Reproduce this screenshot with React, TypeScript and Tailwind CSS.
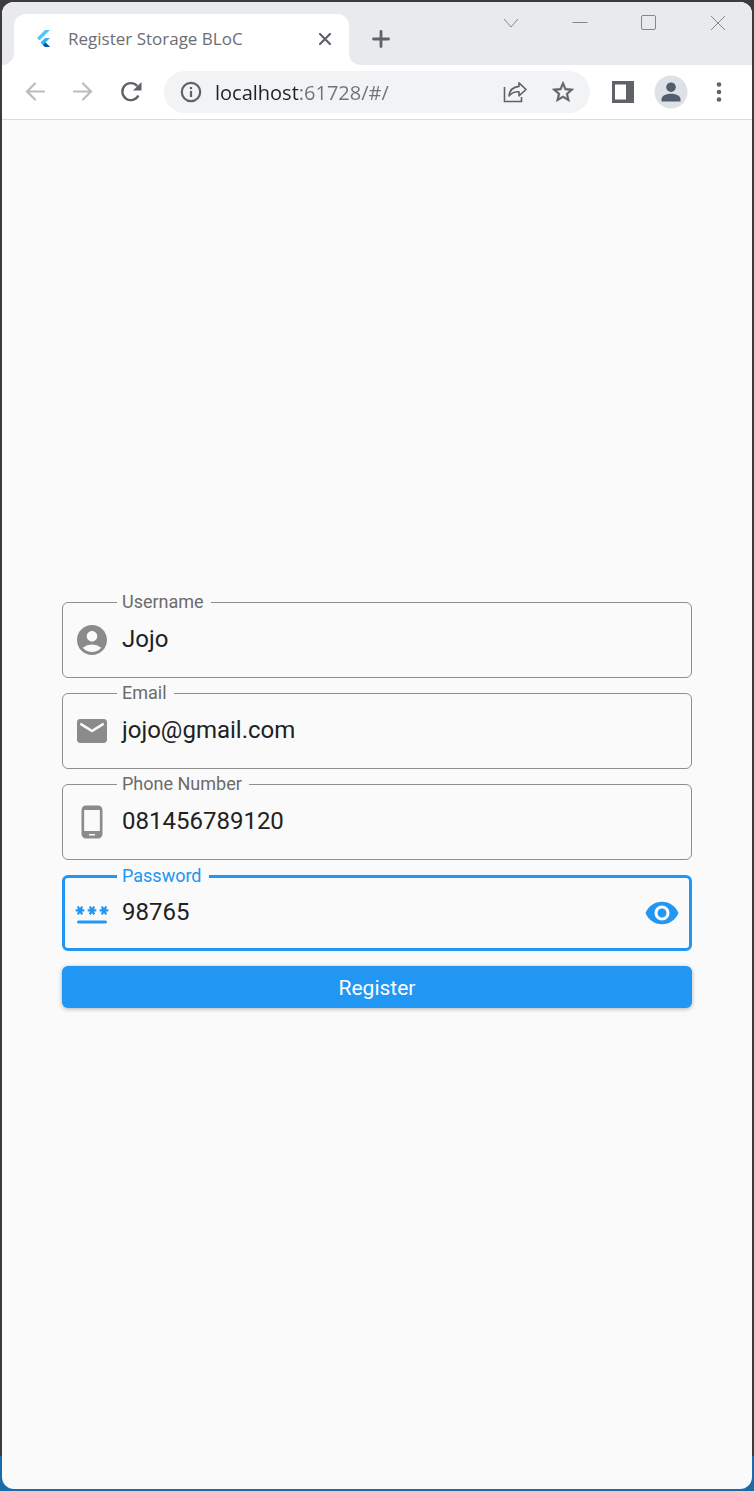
import { useState } from 'react';
import type { ReactNode } from 'react';
import { MdAccountCircle, MdPhoneAndroid, MdVisibility } from 'react-icons/md';

function FlutterLogo() {
  return (
    <svg viewBox="0 0 18 20" className="h-5 w-[18px] shrink-0" aria-hidden="true">
      <path d="M11 1h5L5.500 11.500 3 9z" fill="#54c5f8" />
      <path d="M11 9h5L11.500 13.500l4.500 4.500h-5L6.500 13.500z" fill="#29b6f6" />
      <path d="M9 16l2.500-2.500 4.500 4.500h-5z" fill="#01579b" />
    </svg>
  );
}

function EmailIcon() {
  return (
    <svg viewBox="0 0 24 24" className="size-9 shrink-0" fill="currentColor" aria-hidden="true">
      <path d="M20 4H4c-1.1 0-2 .9-2 2v12c0 1.100.9 2 2 2h16c1.100 0 2-.9 2-2V6c0-1.100-.9-2-2-2zm-.4 4.250l-7.070 4.420c-.32.2-.74.2-1.060 0L4.400 8.250c-.25-.16-.4-.43-.4-.72 0-.67.73-1.070 1.300-.72L12 11l6.700-4.190c.57-.35 1.300.05 1.300.72 0 .29-.15.56-.4.72z" />
    </svg>
  );
}

function PasswordIcon() {
  return (
    <svg viewBox="0 0 24 24" className="size-9 shrink-0" fill="none" stroke="currentColor" strokeWidth="1.5" aria-hidden="true">
      <rect x="2" y="17" width="20" height="2" rx="1" fill="currentColor" stroke="none" />
      {[4, 12, 20].map((x) => (
        <path key={x} d={`M${x - 2.9} 10.300h5.800M${x - 1.45} 7.700l2.900 5.200M${x + 1.45} 7.700l-2.900 5.200`} />
      ))}
    </svg>
  );
}

function WindowButton({ label, children }: { label: string; children: ReactNode }) {
  return (
    <button type="button" aria-label={label} className="flex h-[42px] w-[69px] items-center justify-center text-[#85878a]">
      <svg viewBox="0 0 16 16" className="size-4" fill="none" stroke="currentColor" strokeWidth="1">
        {children}
      </svg>
    </button>
  );
}

function ToolButton({ label, muted, children }: { label: string; muted?: boolean; children: ReactNode }) {
  return (
    <button
      type="button"
      aria-label={label}
      className={`flex h-10 w-12 shrink-0 items-center justify-center ${muted ? 'text-[#babcbe]' : 'text-[#5f6368]'}`}
    >
      {children}
    </button>
  );
}

function TabStrip() {
  return (
    <header className="flex h-[63px] items-start bg-white">
      <div className="h-full w-3 shrink-0 rounded-br-xl bg-[#e8eaed]" />
      <div className="h-full w-[335px] shrink-0 bg-[#e8eaed] pt-3">
        <div className="flex h-full items-center rounded-t-xl bg-white pr-3 pb-0.5 pl-5">
          <FlutterLogo />
          <span className="ml-4 flex-1 truncate font-['Open_Sans','Noto_Sans',sans-serif] text-[17px] text-[#6a6e73]">
            Register Storage BLoC
          </span>
          <button type="button" aria-label="Close tab" className="flex size-6 items-center justify-center text-[#5f6368]">
            <svg viewBox="0 0 14 14" className="size-3.5" stroke="currentColor" strokeWidth="2.2" strokeLinecap="round">
              <path d="M2 2l10 10M12 2L2 12" />
            </svg>
          </button>
        </div>
      </div>
      <div className="flex h-full flex-1 items-start justify-between rounded-bl-xl bg-[#e8eaed]">
        <button type="button" aria-label="New tab" className="mt-[19px] ml-[14px] flex size-9 items-center justify-center text-[#5f6368]">
          <svg viewBox="0 0 18 18" className="size-[18px]" stroke="currentColor" strokeWidth="2.8" strokeLinecap="round">
            <path d="M9 1.500v15M1.500 9h15" />
          </svg>
        </button>
        <div className="flex">
          <WindowButton label="Search tabs">
            <path d="M1 4l7 8 7-8" />
          </WindowButton>
          <WindowButton label="Minimize">
            <path d="M0.500 7.500h15" />
          </WindowButton>
          <WindowButton label="Maximize">
            <rect x="0.500" y="0.500" width="14" height="14" rx="1.500" />
          </WindowButton>
          <WindowButton label="Close">
            <path d="M1 1l14 14M15 1L1 15" />
          </WindowButton>
        </div>
      </div>
    </header>
  );
}

function Toolbar() {
  return (
    <nav className="flex h-[55px] items-center border-b border-[#dadce0] bg-white px-[9px]">
      <ToolButton label="Back" muted>
        <svg viewBox="0 0 20 20" className="size-5" fill="none" stroke="currentColor" strokeWidth="2.2" strokeLinecap="round">
          <path d="M19 9.500H2M10 1.500l-8 8 8 8" />
        </svg>
      </ToolButton>
      <ToolButton label="Forward" muted>
        <svg viewBox="0 0 20 20" className="size-5" fill="none" stroke="currentColor" strokeWidth="2.2" strokeLinecap="round">
          <path d="M1 9.500h17M10 1.500l8 8-8 8" />
        </svg>
      </ToolButton>
      <ToolButton label="Reload">
        <svg viewBox="0 0 22 22" className="size-[22px]" fill="none" stroke="currentColor" strokeWidth="2.4">
          <path d="M18.400 14.500A8.500 8.500 0 1 1 17.200 5" />
          <path d="M21.500 1v8.500H13z" fill="currentColor" stroke="none" />
        </svg>
      </ToolButton>
      <div className="mx-[9px] flex h-[42px] min-w-0 flex-1 items-center rounded-full bg-[#f1f3f4] pr-[3px] pl-4">
        <button type="button" aria-label="Site information" className="mr-[13px] shrink-0 text-[#5f6368]">
          <svg viewBox="0 0 22 22" className="size-[22px]" fill="none" stroke="currentColor" strokeWidth="2.2">
            <circle cx="11" cy="11" r="9.200" />
            <path d="M11 10v6M11 6v2.300" />
          </svg>
        </button>
        <input
          aria-label="Address"
          defaultValue="localhost:61728/#/"
          className="min-w-0 flex-1 bg-linear-to-r from-[#202124] from-[84px] to-[#6f7377] to-[84px] bg-clip-text pt-0.5 font-['Open_Sans','Noto_Sans',sans-serif] text-[20px] text-transparent outline-none"
        />
        <ToolButton label="Share">
          <svg viewBox="0 0 24 22" className="h-[22px] w-6" fill="none" stroke="currentColor" strokeWidth="1.600">
            <path d="M1.500 6v14.500h17V16" />
            <path d="M16 1.800l7 6.700-7 6.300v-4c-4.500-.2-7.500.8-10 4.200.5-5.500 4-9 10-9.600z" strokeLinejoin="round" />
          </svg>
        </ToolButton>
        <ToolButton label="Bookmark this tab">
          <svg viewBox="0 0 24 24" className="size-[26px]" fill="currentColor" stroke="currentColor" strokeWidth="0.400">
            <path d="M22 9.240l-7.190-.62L12 2 9.190 8.630 2 9.240l5.460 4.730L5.820 21 12 17.270 18.180 21l-1.630-7.030L22 9.240zM12 15.400l-3.760 2.270 1-4.280-3.320-2.880 4.380-.38L12 6.100l1.710 4.040 4.380.38-3.320 2.880 1 4.280L12 15.400z" />
          </svg>
        </ToolButton>
      </div>
      <ToolButton label="Side panel">
        <svg viewBox="0 0 22 22" className="size-[22px]">
          <path d="M0 0h22v22H0zM3 3.500v15h11v-15z" fill="currentColor" fillRule="evenodd" />
        </svg>
      </ToolButton>
      <ToolButton label="Profile">
        <svg viewBox="0 0 34 34" className="size-[34px]">
          <circle cx="17" cy="17" r="16.500" fill="#dee1e6" />
          <circle cx="17" cy="12.200" r="4.800" fill="#525d70" />
          <path d="M7.500 26.500v-2.300c0-3.600 5.500-5.400 9.500-5.400s9.500 1.800 9.500 5.400v2.300z" fill="#525d70" />
        </svg>
      </ToolButton>
      <ToolButton label="Menu">
        <svg viewBox="0 0 6 20" className="h-5 w-1.5" fill="currentColor">
          <circle cx="3" cy="2.500" r="2.300" />
          <circle cx="3" cy="10" r="2.300" />
          <circle cx="3" cy="17.500" r="2.300" />
        </svg>
      </ToolButton>
    </nav>
  );
}

type FieldProps = {
  id: string;
  label: string;
  type: string;
  value: string;
  icon: ReactNode;
  active?: boolean;
  action?: ReactNode;
};

function Field({ id, label, type, value, icon, active, action }: FieldProps) {
  return (
    <fieldset
      className={`min-w-0 rounded-md ${
        active ? 'border-3 border-[#2196f3] px-[9px] text-[#2196f3]' : 'border border-[#8e8e8e] px-[11px] text-[#8b8b8b]'
      }`}
    >
      <legend className="ml-[43px] flex h-px items-center pr-[7px] pl-[5px]">
        <label htmlFor={id} className={`text-[18px] leading-none ${active ? '' : 'text-[#6b6b6b]'}`}>
          {label}
        </label>
      </legend>
      <div className={`flex items-center gap-2 ${active ? 'h-[70px]' : 'h-[74px]'}`}>
        {icon}
        <input
          id={id}
          type={type}
          defaultValue={value}
          className="min-w-0 flex-1 bg-transparent pb-0.5 indent-1 text-[24px] leading-8 text-[#212121] outline-none"
        />
        {action}
      </div>
    </fieldset>
  );
}

export default function App() {
  const [visible, setVisible] = useState(true);

  return (
    <div className="flex min-h-screen flex-col bg-linear-to-t from-[#1b6ba6] from-[35px] to-[#3c3c3c] to-[35px] p-0.5 font-[Roboto,sans-serif]">
      <div className="flex flex-1 flex-col overflow-hidden rounded-xl bg-[#fafafa]">
        <TabStrip />
        <Toolbar />
        <main className="flex flex-1 flex-col justify-center px-[60px]">
          <form className="flex flex-col gap-[15px]" onSubmit={(event) => event.preventDefault()}>
            <Field id="username" label="Username" type="text" value="Jojo" icon={<MdAccountCircle className="size-9 shrink-0" />} />
            <Field id="email" label="Email" type="email" value="jojo@gmail.com" icon={<EmailIcon />} />
            <Field id="phone" label="Phone Number" type="tel" value="081456789120" icon={<MdPhoneAndroid className="size-9 shrink-0" />} />
            <Field
              id="password"
              label="Password"
              type={visible ? 'text' : 'password'}
              value="98765"
              icon={<PasswordIcon />}
              active
              action={
                <button type="button" aria-label="Toggle password visibility" onClick={() => setVisible(!visible)}>
                  <MdVisibility className="size-9" />
                </button>
              }
            />
            <button
              type="submit"
              className="h-[42px] rounded-md bg-[#2196f3] pt-1 text-[21px] leading-none text-white shadow-[0_1px_4px_rgba(0,0,0,0.3)]"
            >
              Register
            </button>
          </form>
        </main>
      </div>
    </div>
  );
}
